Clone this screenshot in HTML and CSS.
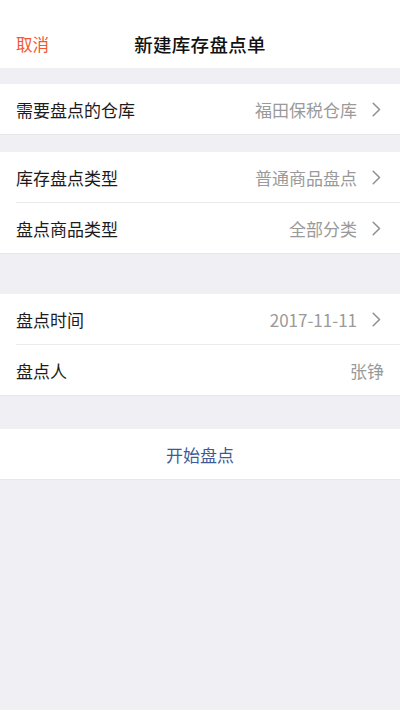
FILE: index.html
```html
<!DOCTYPE html>
<html lang="zh-CN">
<head>
<meta charset="utf-8">
<title>新建库存盘点单</title>
<link rel="stylesheet" href="styles.css">
</head>
<body>
<div class="page">
  <header class="nav">
    <span class="nav-cancel">取消</span>
    <span class="nav-title">新建库存盘点单</span>
  </header>

  <section class="group group-first">
    <div class="row">
      <span class="label">需要盘点的仓库</span>
      <span class="value">福田保税仓库</span>
      <svg class="chev" viewBox="0 0 9 15" width="9" height="15"><path d="M1.2 1.2l6.3 6.3-6.3 6.3" fill="none" stroke="#8e8e93" stroke-width="1.5" stroke-linecap="round" stroke-linejoin="round"/></svg>
    </div>
  </section>

  <section class="group group-second">
    <div class="row">
      <span class="label">库存盘点类型</span>
      <span class="value">普通商品盘点</span>
      <svg class="chev" viewBox="0 0 9 15" width="9" height="15"><path d="M1.2 1.2l6.3 6.3-6.3 6.3" fill="none" stroke="#8e8e93" stroke-width="1.5" stroke-linecap="round" stroke-linejoin="round"/></svg>
    </div>
    <div class="row">
      <span class="label">盘点商品类型</span>
      <span class="value">全部分类</span>
      <svg class="chev" viewBox="0 0 9 15" width="9" height="15"><path d="M1.2 1.2l6.3 6.3-6.3 6.3" fill="none" stroke="#8e8e93" stroke-width="1.5" stroke-linecap="round" stroke-linejoin="round"/></svg>
    </div>
  </section>

  <section class="group group-third">
    <div class="row">
      <span class="label">盘点时间</span>
      <span class="value">2017-11-11</span>
      <svg class="chev" viewBox="0 0 9 15" width="9" height="15"><path d="M1.2 1.2l6.3 6.3-6.3 6.3" fill="none" stroke="#8e8e93" stroke-width="1.5" stroke-linecap="round" stroke-linejoin="round"/></svg>
    </div>
    <div class="row">
      <span class="label">盘点人</span>
      <span class="value value-plain">张铮</span>
    </div>
  </section>

  <section class="group group-action">
    <div class="action">开始盘点</div>
  </section>
</div>
</body>
</html>
```

FILE: styles.css
```css
* { box-sizing: border-box; }
html, body {
  margin: 0;
  padding: 0;
  background: #efeff4;
  font-family: "Noto Sans CJK SC", "Noto Sans", "Liberation Sans", sans-serif;
}
.page {
  width: 400px;
  min-height: 710px;
  background: #efeff4;
}
.nav {
  height: 68px;
  padding-top: 20px;
  background: #ffffff;
  display: flex;
  align-items: center;
  justify-content: center;
  position: relative;
}
.nav-cancel {
  position: absolute;
  left: 16px;
  top: 20px;
  height: 48px;
  line-height: 48px;
  font-size: 16.5px;
  color: #f0582f;
}
.nav-title {
  font-size: 18.5px;
  font-weight: 500;
  color: #111;
  letter-spacing: 0.3px;
}
.group {
  background: #ffffff;
  border-bottom: 1px solid #e6e6eb;
}
.group-first { margin-top: 16px; }
.group-second { margin-top: 17px; }
.group-third { margin-top: 40px; }
.group-action { margin-top: 33px; }
.row {
  height: 51px;
  margin-left: 16px;
  padding-right: 19px;
  display: flex;
  align-items: center;
  border-top: 1px solid #ececf0;
}
.row:first-child { border-top: none; height: 50px; }
.label {
  flex: 1;
  font-size: 17px;
  color: #1c1c1c;
}
.value {
  font-size: 17px;
  color: #9a9a9a;
}
.value-plain { margin-right: -3px; }
.chev {
  margin-left: 15px;
  flex: none;
}
.action {
  height: 50px;
  display: flex;
  align-items: center;
  justify-content: center;
  font-size: 17px;
  color: #3f5a96;
}
```
